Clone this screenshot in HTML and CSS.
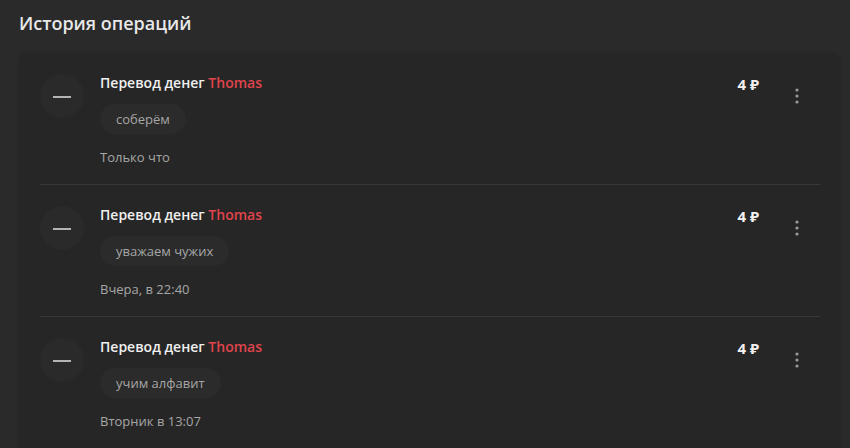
FILE: index.html
```html
<!DOCTYPE html>
<html lang="ru">
<head>
    <meta charset="UTF-8">
    <meta name="viewport" content="width=device-width, initial-scale=1.0">
    <title>История операций</title>
    <link rel="stylesheet" href="styles.css">
</head>
<body>
    <div class="page">
        <h1 class="title">История операций</h1>

        <div class="history">
            <div class="op">
                <div class="op-icon"><span class="dash"></span></div>
                <div class="op-body">
                    <div class="op-name">Перевод денег <span class="user">Thomas</span></div>
                    <div class="op-comment">соберём</div>
                    <div class="op-time">Только что</div>
                </div>
                <div class="op-sum">4 ₽</div>
                <button class="op-more" aria-label="Меню">
                    <svg width="4" height="16" viewBox="0 0 4 16"><circle cx="2" cy="2" r="1.6"/><circle cx="2" cy="8" r="1.6"/><circle cx="2" cy="14" r="1.6"/></svg>
                </button>
            </div>

            <div class="op">
                <div class="op-icon"><span class="dash"></span></div>
                <div class="op-body">
                    <div class="op-name">Перевод денег <span class="user">Thomas</span></div>
                    <div class="op-comment">уважаем чужих</div>
                    <div class="op-time">Вчера, в 22:40</div>
                </div>
                <div class="op-sum">4 ₽</div>
                <button class="op-more" aria-label="Меню">
                    <svg width="4" height="16" viewBox="0 0 4 16"><circle cx="2" cy="2" r="1.6"/><circle cx="2" cy="8" r="1.6"/><circle cx="2" cy="14" r="1.6"/></svg>
                </button>
            </div>

            <div class="op">
                <div class="op-icon"><span class="dash"></span></div>
                <div class="op-body">
                    <div class="op-name">Перевод денег <span class="user">Thomas</span></div>
                    <div class="op-comment">учим алфавит</div>
                    <div class="op-time">Вторник в 13:07</div>
                </div>
                <div class="op-sum">4 ₽</div>
                <button class="op-more" aria-label="Меню">
                    <svg width="4" height="16" viewBox="0 0 4 16"><circle cx="2" cy="2" r="1.6"/><circle cx="2" cy="8" r="1.6"/><circle cx="2" cy="14" r="1.6"/></svg>
                </button>
            </div>
        </div>
    </div>
</body>
</html>
```

FILE: styles.css
```css
body {
    margin: 0;
    background-color: #2a2a2a;
    font-family: "Open Sans", "Noto Sans", sans-serif;
    color: #e6e6e6;
    overflow: hidden;
}
.page {
    padding: 11px 10px 0 19px;
}
.title {
    margin: 0 0 18px;
    font-size: 18px;
    font-weight: 600;
    line-height: 24px;
    color: #e8e8e8;
}
.history {
    background-color: #262626;
    border-radius: 10px;
    padding: 0 20px 20px 21px;
    box-shadow: 0 0 3px rgba(0, 0, 0, 0.25);
}
.op {
    display: flex;
    align-items: flex-start;
    padding: 20px 0 18px;
    border-bottom: 1px solid #383838;
}
.op:last-child {
    border-bottom: none;
}
.op-icon {
    width: 44px;
    height: 44px;
    margin-top: 1px;
    border-radius: 50%;
    background-color: #2a2a2a;
    display: flex;
    align-items: center;
    justify-content: center;
    flex-shrink: 0;
}
.dash {
    width: 18px;
    height: 2px;
    background-color: #b4b4b4;
    margin-top: 1px;
}
.op-body {
    flex: 1;
    margin-left: 16px;
}
.op-name {
    font-size: 14px;
    font-weight: 600;
    line-height: 20px;
    color: #f0f0f0;
}
.user {
    color: #e0444c;
}
.op-comment {
    display: inline-block;
    margin-top: 11px;
    padding: 0 16px;
    height: 30px;
    line-height: 30px;
    border-radius: 15px;
    background-color: #2b2b2b;
    font-size: 13px;
    color: #a6a6a6;
}
.op-time {
    margin-top: 14px;
    font-size: 13px;
    line-height: 18px;
    color: #a6a6a6;
}
.op-sum {
    font-size: 15px;
    font-weight: 700;
    line-height: 22px;
    color: #f2f2f2;
    margin-right: 22px;
}
.op-more {
    width: 32px;
    height: 32px;
    margin-top: 7px;
    margin-right: 7px;
    padding: 0;
    border: none;
    background: none;
    display: flex;
    align-items: center;
    justify-content: center;
    cursor: pointer;
}
.op-more svg {
    fill: #9a9a9a;
}
```
